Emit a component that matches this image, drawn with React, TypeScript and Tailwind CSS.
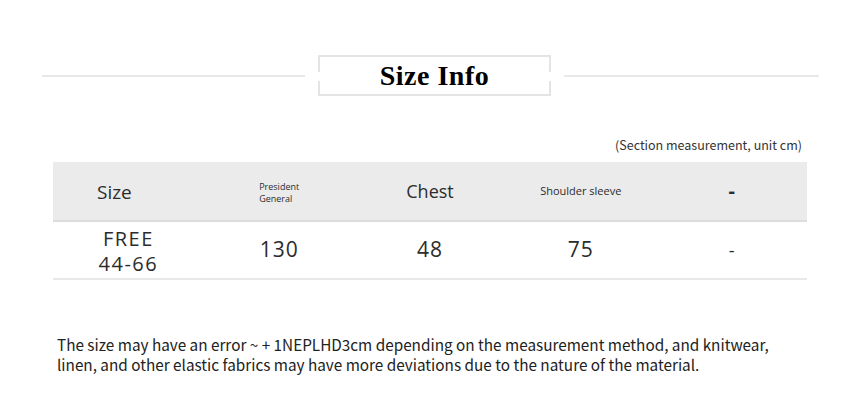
const body = "font-['Noto_Sans_CJK_SC','Noto_Sans',sans-serif]";
const table = "font-['Open_Sans','Noto_Sans',sans-serif]";

function Cell({ children, className = "" }: { children: React.ReactNode; className?: string }) {
  return <div className={`flex items-center justify-center ${className}`}>{children}</div>;
}

export default function App() {
  return (
    <div className="h-[408px] w-[860px] overflow-hidden bg-white text-[#333]">
      {/* title band */}
      <div className="flex items-center pt-[55px]">
        <div className="ml-[42px] h-[2px] w-[263px] bg-[#e8e8e8]" />
        <div className="relative ml-[13px] flex h-[41px] w-[233px] items-center justify-center border-y-2 border-[#e4e4e4]">
          <span className="absolute left-0 top-0 h-[15px] w-[2px] bg-[#e4e4e4]" />
          <span className="absolute bottom-0 left-0 h-[13px] w-[2px] bg-[#e4e4e4]" />
          <span className="absolute right-0 top-0 h-[15px] w-[2px] bg-[#e4e4e4]" />
          <span className="absolute bottom-0 right-0 h-[13px] w-[2px] bg-[#e4e4e4]" />
          <span className="font-['Liberation_Serif',serif] text-[28px] font-bold leading-none tracking-[0.5px] text-black">
            Size Info
          </span>
        </div>
        <div className="ml-[13px] h-[2px] w-[255px] bg-[#e8e8e8]" />
      </div>

      {/* note */}
      <div className={`mt-[40px] pr-[58px] text-right text-[12.5px] leading-[18px] ${body}`}>
        (Section measurement, unit cm)
      </div>

      {/* table */}
      <div className={`ml-[53px] mt-[8px] w-[754px] text-[#2c2c2c] ${table}`}>
        <div className="grid h-[60px] grid-cols-5 border-b-2 border-[#dcdcdc] bg-[#ebebeb]">
          <Cell className="pr-[28px] pt-[2px] text-[19px]">Size</Cell>
          <Cell className="pt-[3px]">
            <span className="text-left text-[9px] leading-[12px]">
              President
              <br />
              General
            </span>
          </Cell>
          <Cell className="pt-[1px] text-[18px]">Chest</Cell>
          <Cell className="text-[11px]">Shoulder sleeve</Cell>
          <Cell className="text-[20px] font-bold">-</Cell>
        </div>
        <div className="grid h-[58px] grid-cols-5 border-b-2 border-[#e8e8e8] text-[21px]">
          <Cell className="pt-[2px]">
            <span className="text-center text-[20px] leading-[25px] tracking-[1.5px]">
              FREE
              <br />
              44-66
            </span>
          </Cell>
          <Cell className="tracking-[1px]">130</Cell>
          <Cell className="tracking-[1px]">48</Cell>
          <Cell className="tracking-[1px]">75</Cell>
          <Cell className="text-[18px]">-</Cell>
        </div>
      </div>

      {/* disclaimer */}
      <p className={`ml-[57px] mt-[54px] text-[15.3px] leading-[20px] text-[#222] ${body}`}>
        The size may have an error ~ + 1NEPLHD3cm depending on the measurement method, and knitwear,
        <br />
        linen, and other elastic fabrics may have more deviations due to the nature of the material.
      </p>
    </div>
  );
}
